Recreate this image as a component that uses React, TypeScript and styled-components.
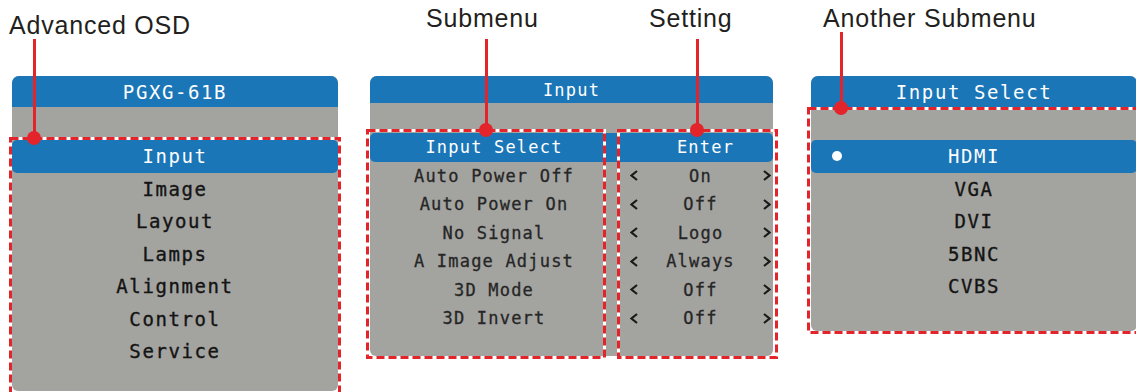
import React from 'react';
import styled, { createGlobalStyle } from 'styled-components';

const BLUE = '#1b76b8';
const GRAY = '#a3a39f';
const RED = '#e3242b';

const GlobalStyle = createGlobalStyle`
  html, body {
    margin: 0;
    padding: 0;
    background: #ffffff;
  }
`;

const Page = styled.div`
  position: relative;
  width: 1136px;
  height: 392px;
  overflow: hidden;
  display: flex;
  align-items: flex-start;
  box-sizing: border-box;
  padding: 76px 0 0 12px;
  background: #ffffff;
`;

const Panel = styled.div<{ $width: number; $gap: number; $font: number; $spacing: number }>`
  flex-shrink: 0;
  width: ${(p) => p.$width}px;
  margin-right: ${(p) => p.$gap}px;
  background: ${GRAY};
  border-radius: 7px 7px 6px 6px;
  overflow: hidden;
  font-family: 'DejaVu Sans Mono', 'Liberation Mono', monospace;
  font-size: ${(p) => p.$font}px;
  letter-spacing: ${(p) => p.$spacing}px;
  color: #141414;
`;

const Header = styled.div<{ $height: number }>`
  height: ${(p) => p.$height}px;
  background: ${BLUE};
  color: #fff;
  display: flex;
  align-items: center;
  justify-content: center;
`;

const Body = styled.div<{ $top: number; $bottom: number }>`
  padding: ${(p) => p.$top}px 0 ${(p) => p.$bottom}px;
  display: flex;
  flex-direction: column;
`;

const Item = styled.div<{ $height: number; $active?: boolean }>`
  position: relative;
  height: ${(p) => p.$height}px;
  display: flex;
  align-items: center;
  justify-content: center;
  background: ${(p) => (p.$active ? BLUE : 'transparent')};
  color: ${(p) => (p.$active ? '#fff' : '#141414')};
  -webkit-text-stroke: ${(p) => (p.$active ? '0' : '0.35px')};
  border-radius: 5px;
`;

const GridRow = styled.div<{ $active?: boolean }>`
  height: 28.5px;
  display: grid;
  grid-template-columns: 248px 155px;
  align-items: center;
  background: ${(p) => (p.$active ? BLUE : 'transparent')};
  color: ${(p) => (p.$active ? '#fff' : '#262626')};
  -webkit-text-stroke: ${(p) => (p.$active ? '0' : '0.3px')};
  border-radius: 5px;
`;

const Label = styled.div`
  text-align: center;
`;

const Value = styled.div<{ $plain?: boolean }>`
  display: flex;
  align-items: center;
  padding: 0 2px 0 ${(p) => (p.$plain ? 22 : 12)}px;
`;

const ChevronIcon = styled.svg`
  flex-shrink: 0;
  display: block;
`;

const ValueText = styled.span`
  flex: 1;
  text-align: center;
`;

const Bullet = styled.span`
  position: absolute;
  left: 21px;
  top: 50%;
  width: 10px;
  height: 10px;
  margin-top: -5px;
  border-radius: 50%;
  background: #fff;
`;

const Caption = styled.div<{ $left: number; $top: number }>`
  position: absolute;
  left: ${(p) => p.$left}px;
  top: ${(p) => p.$top}px;
  font-family: 'Liberation Sans', Arial, sans-serif;
  font-size: 25px;
  line-height: 1;
  letter-spacing: 0.8px;
  color: #231f20;
  white-space: nowrap;
`;

const Leader = styled.div<{ $x: number; $from: number; $to: number }>`
  position: absolute;
  left: ${(p) => p.$x - 1.5}px;
  top: ${(p) => p.$from}px;
  width: 3px;
  height: ${(p) => p.$to - p.$from}px;
  background: ${RED};
  z-index: 3;
`;

const Dot = styled.div<{ $x: number; $y: number }>`
  position: absolute;
  left: ${(p) => p.$x - 7}px;
  top: ${(p) => p.$y - 7}px;
  width: 14px;
  height: 14px;
  border-radius: 50%;
  background: ${RED};
  z-index: 3;
`;

const Frame = styled.svg<{ $left: number; $top: number }>`
  position: absolute;
  left: ${(p) => p.$left}px;
  top: ${(p) => p.$top}px;
  overflow: visible;
  z-index: 2;
`;

// the little "<" / ">" arrows of a setting row
const Chevron: React.FC<{ dir: 'left' | 'right' }> = ({ dir }) => (
  <ChevronIcon width={8} height={11} viewBox="0 0 8 11">
    <path
      d={dir === 'left' ? 'M7 1 L1.5 5.5 L7 10' : 'M1 1 L6.5 5.5 L1 10'}
      fill="none"
      stroke="#1a1a1a"
      strokeWidth={2.2}
    />
  </ChevronIcon>
);

const DashedBox: React.FC<{ x: number; y: number; w: number; h: number }> = ({ x, y, w, h }) => (
  <Frame $left={x} $top={y} width={w} height={h}>
    <rect x={1.5} y={1.5} width={w - 3} height={h - 3} fill="none" stroke="#fff" strokeWidth={3} />
    <rect
      x={1.5}
      y={1.5}
      width={w - 3}
      height={h - 3}
      fill="none"
      stroke={RED}
      strokeWidth={3}
      strokeDasharray="8 4"
    />
  </Frame>
);

const mainMenu = ['Input', 'Image', 'Layout', 'Lamps', 'Alignment', 'Control', 'Service'];

const inputRows = [
  { label: 'Auto Power Off', value: 'On' },
  { label: 'Auto Power On', value: 'Off' },
  { label: 'No Signal', value: 'Logo' },
  { label: 'A Image Adjust', value: 'Always' },
  { label: '3D Mode', value: 'Off' },
  { label: '3D Invert', value: 'Off' },
];

const sources = ['HDMI', 'VGA', 'DVI', '5BNC', 'CVBS'];

const callouts = [
  { text: 'Advanced OSD', left: 9, top: 13, x: 34, from: 39, to: 138 },
  { text: 'Submenu', left: 426, top: 6, x: 486, from: 39, to: 130 },
  { text: 'Setting', left: 649, top: 6, x: 697, from: 39, to: 130 },
  { text: 'Another Submenu', left: 823, top: 6, x: 841, from: 32, to: 108 },
];

const App: React.FC = () => (
  <>
    <GlobalStyle />
    <Page>
      <Panel $width={326} $gap={32} $font={19} $spacing={1.6}>
        <Header $height={31}>PGXG-61B</Header>
        <Body $top={33} $bottom={23}>
          {mainMenu.map((m, i) => (
            <Item key={m} $height={32.5} $active={i === 0}>
              {m}
            </Item>
          ))}
        </Body>
      </Panel>

      <Panel $width={403} $gap={38} $font={17} $spacing={1.2}>
        <Header $height={27}>Input</Header>
        <Body $top={30} $bottom={23}>
          <GridRow $active>
            <Label>Input Select</Label>
            <Value $plain>
              <ValueText>Enter</ValueText>
            </Value>
          </GridRow>
          {inputRows.map((r) => (
            <GridRow key={r.label}>
              <Label>{r.label}</Label>
              <Value>
                <Chevron dir="left" />
                <ValueText>{r.value}</ValueText>
                <Chevron dir="right" />
              </Value>
            </GridRow>
          ))}
        </Body>
      </Panel>

      <Panel $width={326} $gap={0} $font={19} $spacing={1.6}>
        <Header $height={32}>Input Select</Header>
        <Body $top={32} $bottom={28}>
          {sources.map((s, i) => (
            <Item key={s} $height={32.5} $active={i === 0}>
              {i === 0 && <Bullet />}
              {s}
            </Item>
          ))}
        </Body>
      </Panel>

      <DashedBox x={9} y={137} w={332} h={270} />
      <DashedBox x={366} y={129} w={240} h={230} />
      <DashedBox x={617} y={129} w={161} h={230} />
      <DashedBox x={807} y={107} w={340} h={227} />

      {callouts.map((c) => (
        <React.Fragment key={c.text}>
          <Caption $left={c.left} $top={c.top}>
            {c.text}
          </Caption>
          <Leader $x={c.x} $from={c.from} $to={c.to} />
          <Dot $x={c.x} $y={c.to} />
        </React.Fragment>
      ))}
    </Page>
  </>
);

export default App;
